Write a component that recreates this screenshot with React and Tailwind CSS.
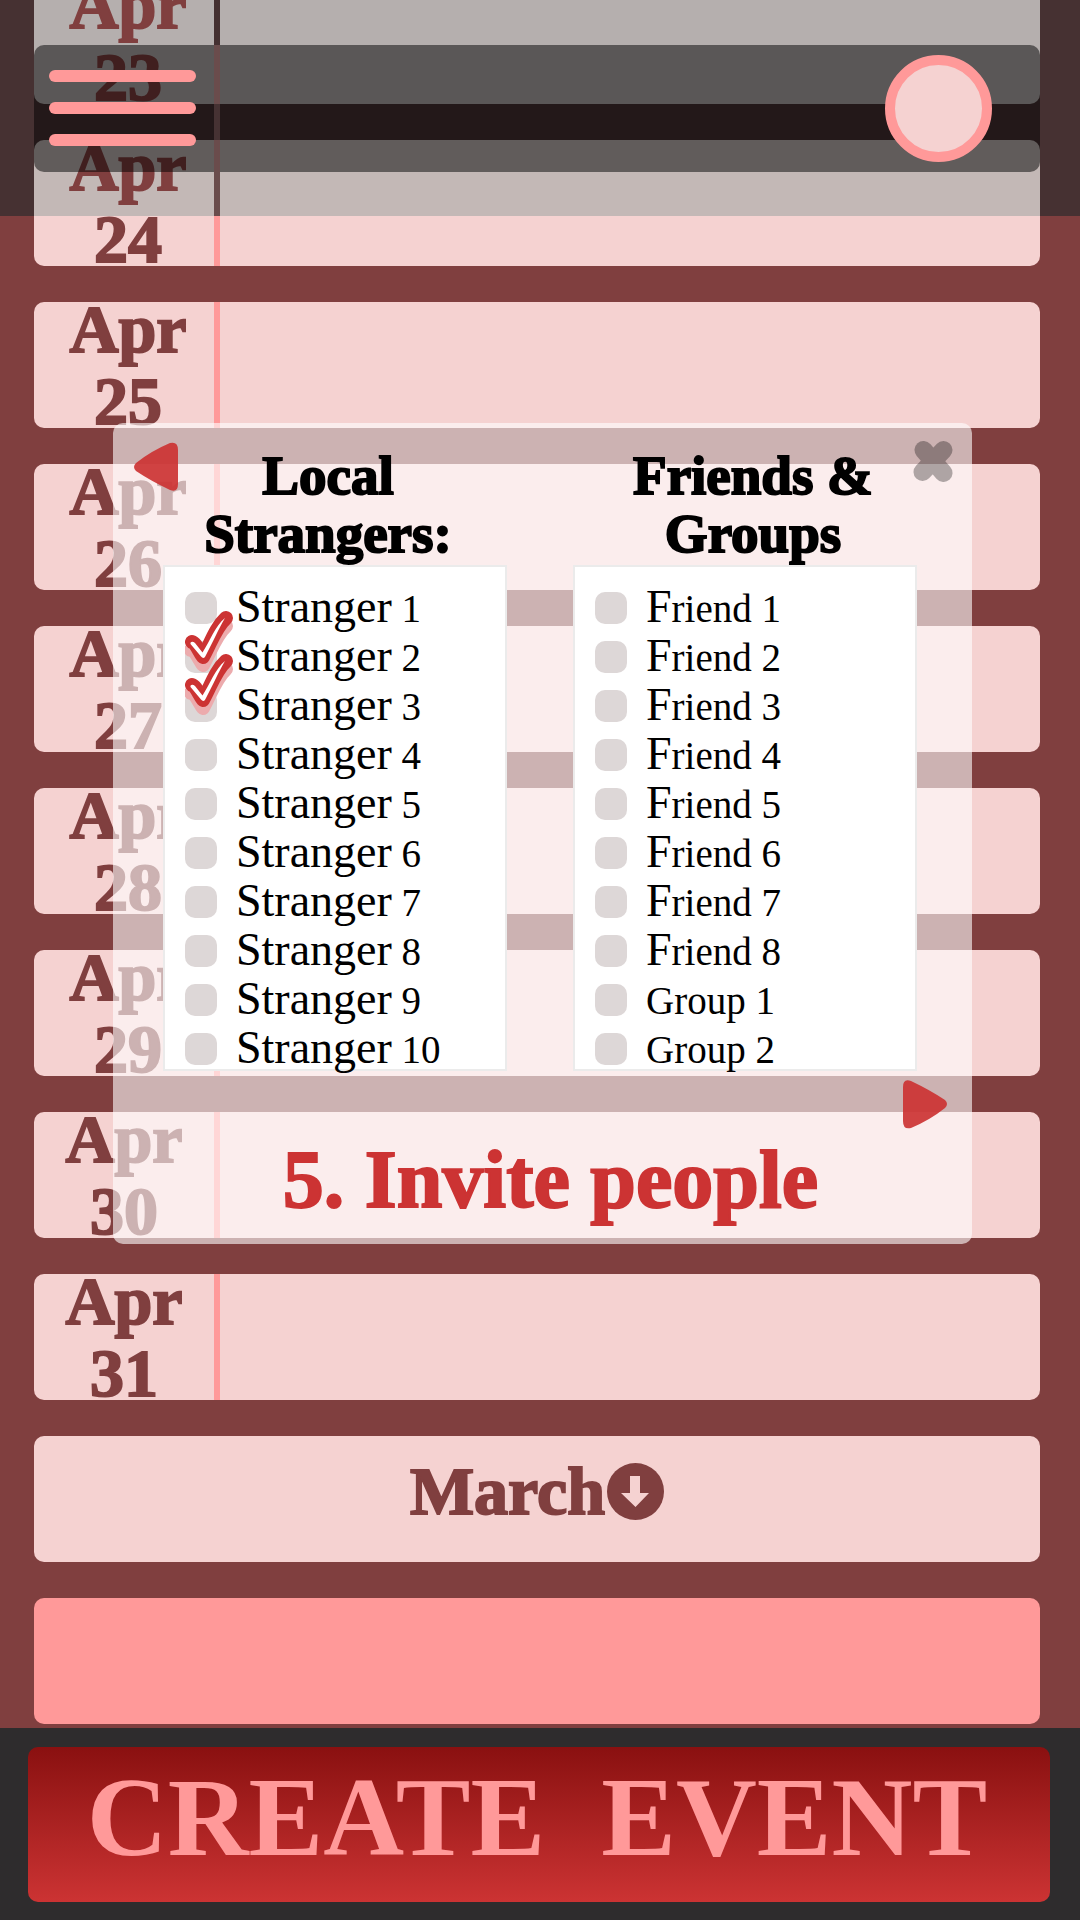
const days = [
  {
    day: 23,
    card: 'bg-[#b5afae]',
    rule: 'bg-[#443031]',
    label: 'pl-2',
  },
  {
    day: 24,
    card: 'bg-[linear-gradient(#c3b8b6_76px,#f5d2d1_76px)]',
    rule: 'bg-[linear-gradient(#6a4c4c_76px,#ff9999_76px)]',
    label: 'pl-2',
  },
  { day: 25, card: 'bg-[#f5d2d1]', rule: 'bg-[#ff9999]', label: 'pl-2' },
  { day: 26, card: 'bg-[#f5d2d1]', rule: 'bg-[#ff9999]', label: 'pl-2' },
  { day: 27, card: 'bg-[#f5d2d1]', rule: 'bg-[#ff9999]', label: 'pl-2' },
  { day: 28, card: 'bg-[#f5d2d1]', rule: 'bg-[#ff9999]', label: 'pl-2' },
  { day: 29, card: 'bg-[#f5d2d1]', rule: 'bg-[#ff9999]', label: 'pl-2' },
  { day: 30, card: 'bg-[#f5d2d1]', rule: 'bg-[#ff9999]', label: '' },
  { day: 31, card: 'bg-[#f5d2d1]', rule: 'bg-[#ff9999]', label: '' },
];

const tickPlace = { 2: '-top-[30px]', 3: '-top-[36px]' };

const strangers = [1, 2, 3, 4, 5, 6, 7, 8, 9, 10].map((n) => ({
  id: `stranger-${n}`,
  big: 'Stranger',
  small: ` ${n}`,
  tick: tickPlace[n],
}));

const friends = [
  ...[1, 2, 3, 4, 5, 6, 7, 8].map((n) => ({ id: `friend-${n}`, big: 'F', small: `riend ${n}` })),
  ...[1, 2].map((n) => ({ id: `group-${n}`, big: '', small: `Group ${n}` })),
];

function DayCard({ day, card, rule, label }) {
  return (
    <section className={`flex h-[126px] items-stretch rounded-[10px] ${card}`}>
      <h2
        className={`flex w-[180px] flex-col justify-center text-center text-[68px] leading-[72px] font-bold text-[#803f3f] [-webkit-text-stroke:2px_#803f3f] ${label}`}
      >
        <span>Apr</span>
        <span>{day}</span>
      </h2>
      <div className={`w-1.5 ${rule}`} />
    </section>
  );
}

function Tick({ place }) {
  return (
    <svg
      className={`pointer-events-none absolute left-0 z-10 ${place}`}
      width="50"
      height="62"
      viewBox="1 0 50 62"
      fill="none"
      strokeLinecap="round"
      strokeLinejoin="round"
      aria-hidden="true"
    >
      <path d="M7 39C12 40 15 49 19 54C26 42 31 25 42 15" stroke="#ecabad" strokeWidth="14" />
      <path d="M8 31C12 32 15 41 19 46C26 34 31 17 42 7" stroke="#cc3333" strokeWidth="14" />
      <path
        d="M6.500 33C6 30.500 9 30 11 32L18.500 41.500C26 30 31 15 41 7C34 19 29 31 21.500 45C20.500 47.500 18.500 47.500 17 45.500Z"
        fill="#fff"
      />
    </svg>
  );
}

function InviteList({ title, pad, items }) {
  return (
    <fieldset className="min-w-0 flex-1">
      <legend
        className={`mb-0.5 w-full text-center text-[55px] leading-[58px] font-bold text-black [-webkit-text-stroke:2px_#000] ${pad}`}
      >
        {title[0]}
        <br />
        {title[1]}
      </legend>
      <ul className="flex flex-col gap-[17px] border-2 border-[#ebebeb] bg-white pt-[25px] pb-1 pl-5">
        {items.map((item) => (
          <li key={item.id} className="relative flex h-8 items-center gap-[19px]">
            <input
              id={item.id}
              type="checkbox"
              defaultChecked={Boolean(item.tick)}
              className="size-8 shrink-0 appearance-none rounded-[10px] bg-[#ddd7d7]"
            />
            {item.tick && <Tick place={item.tick} />}
            <label htmlFor={item.id} className="text-[39px] leading-8 whitespace-pre text-black">
              <span className="text-[46px]">{item.big}</span>
              {item.small}
            </label>
          </li>
        ))}
      </ul>
    </fieldset>
  );
}

function Triangle({ className }) {
  return (
    <svg className={className} width="44" height="49" viewBox="0 0 44 49" aria-hidden="true">
      <path
        d="M2 21Q17 9 36 1Q44-1 44 8Q45 24 44 42Q44 51 36 48Q17 39 2 29Q-2 25 2 21Z"
        fill="#cc3333"
        fillOpacity="0.92"
      />
    </svg>
  );
}

function InviteDialog() {
  return (
    <div
      role="dialog"
      aria-label="Invite people"
      className="absolute top-[423px] right-[108px] left-[113px] rounded-[10px] bg-white/60 pt-6 pb-4"
    >
      <button type="button" aria-label="Previous step" className="absolute top-[19px] left-[21px]">
        <Triangle className="block" />
      </button>
      <button type="button" aria-label="Close" className="absolute top-[17px] right-[19px]">
        <svg className="block" width="40" height="43" viewBox="0 0 40 43" aria-hidden="true">
          <g opacity="0.3" stroke="#000" strokeWidth="18" strokeLinecap="round">
            <path d="M10.500 10L30.500 33" />
            <path d="M30.500 10L9.500 32" />
          </g>
        </svg>
      </button>
      <div className="flex gap-[66px] pr-[55px] pl-[50px]">
        <InviteList title={['Local', 'Strangers:']} pad="pr-3.5" items={strangers} />
        <InviteList title={['Friends &', 'Groups']} pad="pl-4" items={friends} />
      </div>
      <button type="button" aria-label="Next step" className="absolute right-[25px] bottom-[115px]">
        <Triangle className="block rotate-180" />
      </button>
      <h1 className="mt-[61px] pl-4 text-center text-[82px] leading-[96px] font-bold text-[#cc3333] [-webkit-text-stroke:2px_#cc3333]">
        5. Invite people
      </h1>
    </div>
  );
}

export default function App() {
  return (
    <div className="relative min-h-screen overflow-hidden bg-[linear-gradient(#463132_216px,#803f3f_216px)] font-['Liberation_Serif',serif]">
      <main className="-mt-[22px] flex flex-col gap-9 pr-10 pl-[34px]">
        {days.map((d) => (
          <DayCard key={d.day} {...d} />
        ))}
        <button
          type="button"
          className="flex h-[126px] items-center justify-center gap-0.5 rounded-[10px] bg-[#f5d2d1] pb-4 text-[68px] leading-[72px] font-bold text-[#803f3f] [-webkit-text-stroke:2px_#803f3f]"
        >
          March
          <svg width="57" height="57" viewBox="0 0 57 57" aria-hidden="true">
            <circle cx="28.500" cy="28.500" r="28.500" fill="#803f3f" stroke="none" />
            <path d="M23 13H33V30H42L28.500 44L14 30H23Z" fill="#f5d2d1" />
          </svg>
        </button>
        <div className="h-[126px] rounded-[10px] bg-[#ff9999]" />
      </main>

      <header className="absolute inset-x-0 top-0 pt-[45px] pr-10 pl-[34px]">
        <div className="relative flex h-[127px] items-start justify-between rounded-[10px] bg-black/50 pt-2.5 pr-12 pl-[15px]">
          <div className="absolute inset-y-0 left-[180px] w-1.5 bg-[linear-gradient(#6a4c4c_59px,#463233_59px,#463233_95px,#6a4c4c_95px)]" />
          <button type="button" aria-label="Menu" className="mt-[15px] flex w-[147px] flex-col gap-5">
            <span className="h-3 rounded-full bg-[#ff9999]" />
            <span className="h-3 rounded-full bg-[#ff9999]" />
            <span className="h-3 rounded-full bg-[#ff9999]" />
          </button>
          <button
            type="button"
            aria-label="Profile"
            className="size-[107px] rounded-full border-10 border-[#ff9999] bg-[#f5d2d1]"
          />
        </div>
      </header>

      <InviteDialog />

      <footer className="mt-1 bg-[#2e2c2d] pt-[19px] pr-[30px] pb-[18px] pl-7">
        <button
          type="button"
          className="flex h-[155px] w-full items-center justify-center gap-[56px] rounded-[10px] bg-linear-to-b from-[#8a1010] to-[#cc3333] pr-1 pb-4 text-[112px] leading-none font-bold text-[#ff9999]"
        >
          <span>CREATE</span>
          <span>EVENT</span>
        </button>
      </footer>
    </div>
  );
}
